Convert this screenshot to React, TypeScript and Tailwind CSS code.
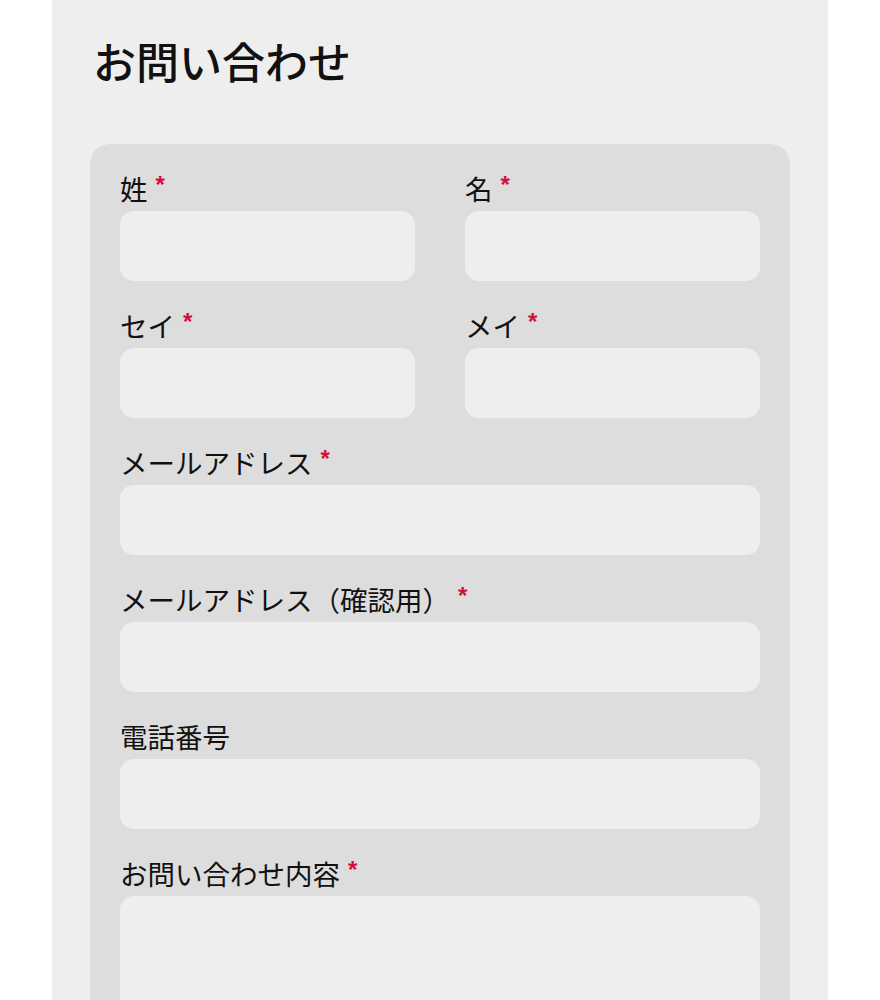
import type { ReactNode } from "react";

// Single contact form page (お問い合わせ)

const FONT = "font-['Noto_Sans_CJK_JP','Noto_Sans',sans-serif]";

function Label({ children, required }: { children: ReactNode; required?: boolean }) {
  return (
    <label className="mb-[5px] flex h-[36px] items-start text-[27.5px] leading-[36px] text-[#111]">
      <span>{children}</span>
      {required && (
        <span className="ml-[8px] mt-[3px] font-['Liberation_Sans',sans-serif] text-[24px] font-bold leading-none text-[#d0103a]">
          *
        </span>
      )}
    </label>
  );
}

function Field({
  label,
  required,
  tall,
}: {
  label: string;
  required?: boolean;
  tall?: boolean;
}) {
  return (
    <div className="flex flex-col">
      <Label required={required}>{label}</Label>
      {tall ? (
        <textarea className="h-[240px] w-full resize-none rounded-[14px] bg-[#eeeeee] outline-none" />
      ) : (
        <input className="h-[70px] w-full rounded-[14px] bg-[#eeeeee] outline-none" />
      )}
    </div>
  );
}

export default function App() {
  return (
    <div className={`min-h-screen bg-white ${FONT}`}>
      <div className="mx-auto min-h-[1000px] w-[776px] bg-[#eeeeee] px-[38px]">
        <h1 className="pt-[32px] pl-[3px] text-[43px] font-medium leading-[56px] text-[#111]">
          お問い合わせ
        </h1>

        <form className="mt-[56px] rounded-[20px] bg-[#dddddd] px-[30px] pt-[26px] pb-[40px]">
          <div className="flex flex-col gap-[26px]">
            <div className="grid grid-cols-2 gap-x-[50px] gap-y-[26px]">
              <Field label="姓" required />
              <Field label="名" required />
              <Field label="セイ" required />
              <Field label="メイ" required />
            </div>
            <Field label="メールアドレス" required />
            <Field label="メールアドレス（確認用）" required />
            <Field label="電話番号" />
            <Field label="お問い合わせ内容" required tall />
          </div>
        </form>
      </div>
    </div>
  );
}
